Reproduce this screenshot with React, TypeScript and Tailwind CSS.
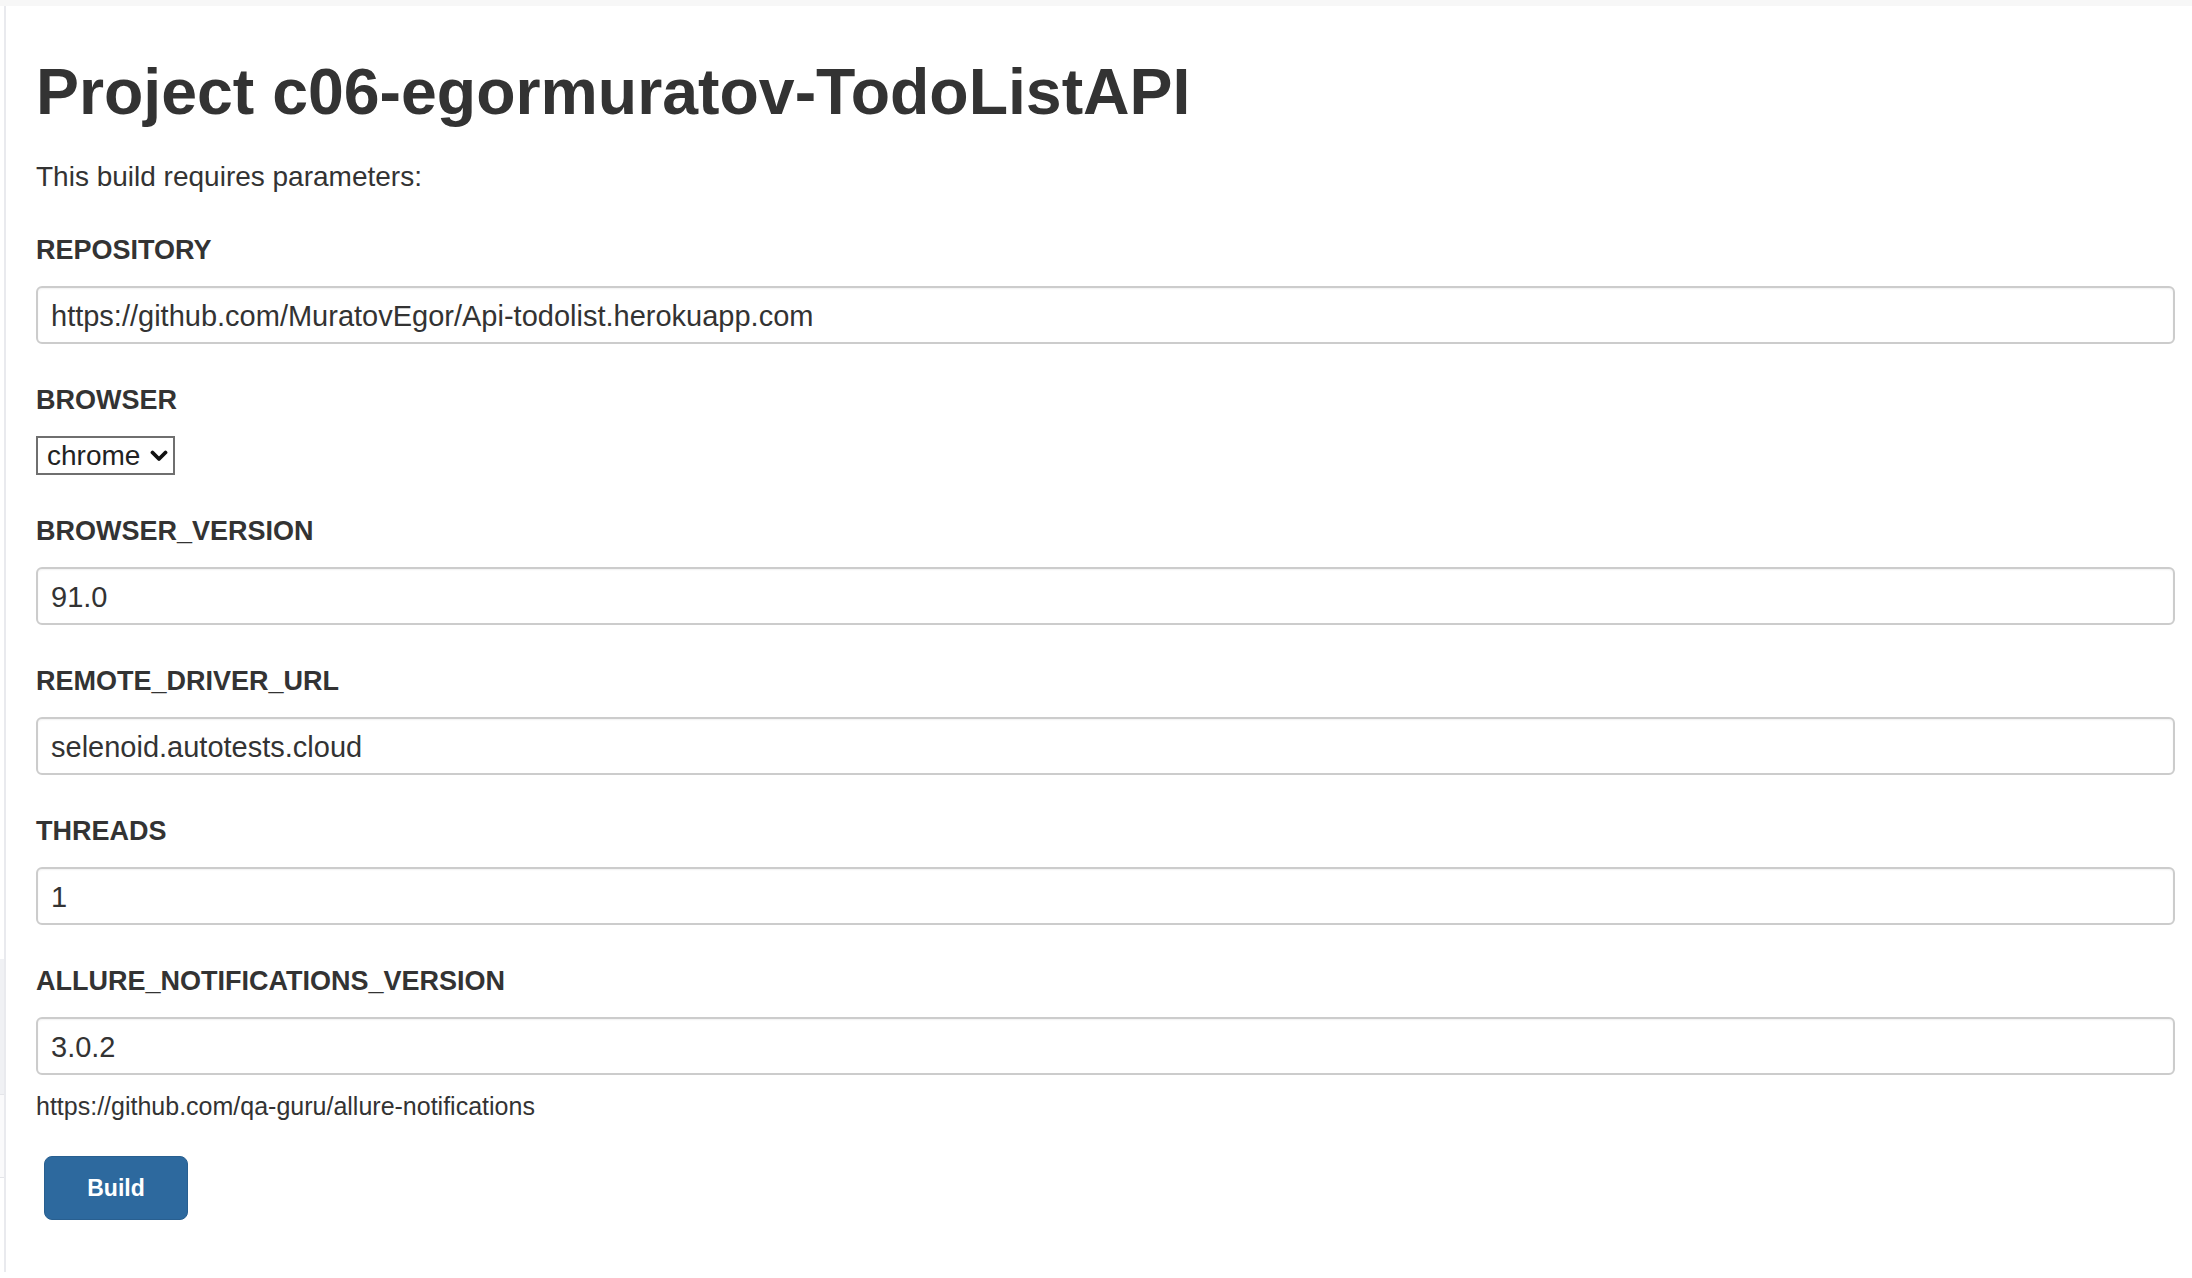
import React from "react";

const params = [
  { name: "REPOSITORY", value: "https://github.com/MuratovEgor/Api-todolist.herokuapp.com" },
  { name: "BROWSER", select: "chrome" },
  { name: "BROWSER_VERSION", value: "91.0" },
  { name: "REMOTE_DRIVER_URL", value: "selenoid.autotests.cloud" },
  { name: "THREADS", value: "1" },
  {
    name: "ALLURE_NOTIFICATIONS_VERSION",
    value: "3.0.2",
    help: "https://github.com/qa-guru/allure-notifications",
  },
];

const Chevron = () => (
  <svg width="18" height="12" viewBox="0 0 18 12" className="ml-[10px]">
    <path d="M2.5 2.5 L9 9 L15.5 2.5" fill="none" stroke="#111" strokeWidth="3.8" strokeLinecap="round" strokeLinejoin="round" />
  </svg>
);

export default function App() {
  return (
    <div className="min-h-screen bg-white font-['Liberation_Sans',Arial,sans-serif] text-[#333]">
      <div className="h-[6px] bg-[#f7f7f7]" />
      <div className="flex">
        {/* cut-off sidebar edge */}
        <div className="flex w-[4px] flex-col">
          <div className="h-[953px] bg-white" />
          <div className="h-[135px] bg-[#f0f1f4]" />
          <div className="h-[1px] bg-[#e4e5e9]" />
          <div className="h-[82px] bg-[#fafafb]" />
          <div className="h-[1px] bg-[#e4e5e9]" />
          <div className="flex-1 bg-white" />
        </div>
        <div className="w-[2px] bg-[#e9eaee]" />
        <main className="flex-1 pb-[52px] pl-[30px] pr-[17px] pt-[51px]">
          <h1 className="text-[64.4px] font-bold leading-[70px]">Project c06-egormuratov-TodoListAPI</h1>
          <p className="mt-[30px] text-[28px] leading-[39px]">This build requires parameters:</p>

          <div className="mt-[35px] flex flex-col gap-[37px]">
            {params.map((p) => (
              <div key={p.name} className="flex flex-col">
                <div className="text-[27px] font-bold leading-[39px] text-[#333]">{p.name}</div>
                {p.select ? (
                  <div className="mt-[16px] flex h-[39px] w-[139px] items-center border-2 border-[#6f6f6f] bg-white pl-[9px] text-[28px] leading-none text-[#222]">
                    {p.select}
                    <Chevron />
                  </div>
                ) : (
                  <div className="mt-[16px] flex h-[58px] items-center rounded-[6px] border-2 border-[#cccccc] bg-white px-[13px] pt-[2px] text-[29px] leading-none text-[#333] shadow-[inset_0_1px_2px_rgba(0,0,0,0.06)]">
                    {p.value}
                  </div>
                )}
                {p.help && (
                  <div className="mt-[14px] text-[25px] leading-[34px] text-[#333]">{p.help}</div>
                )}
              </div>
            ))}
          </div>

          <button className="ml-[8px] mt-[33px] h-[64px] w-[144px] rounded-[8px] border border-[#285f90] bg-[#2d699e] text-[23px] font-bold text-white">
            Build
          </button>
        </main>
      </div>
    </div>
  );
}
